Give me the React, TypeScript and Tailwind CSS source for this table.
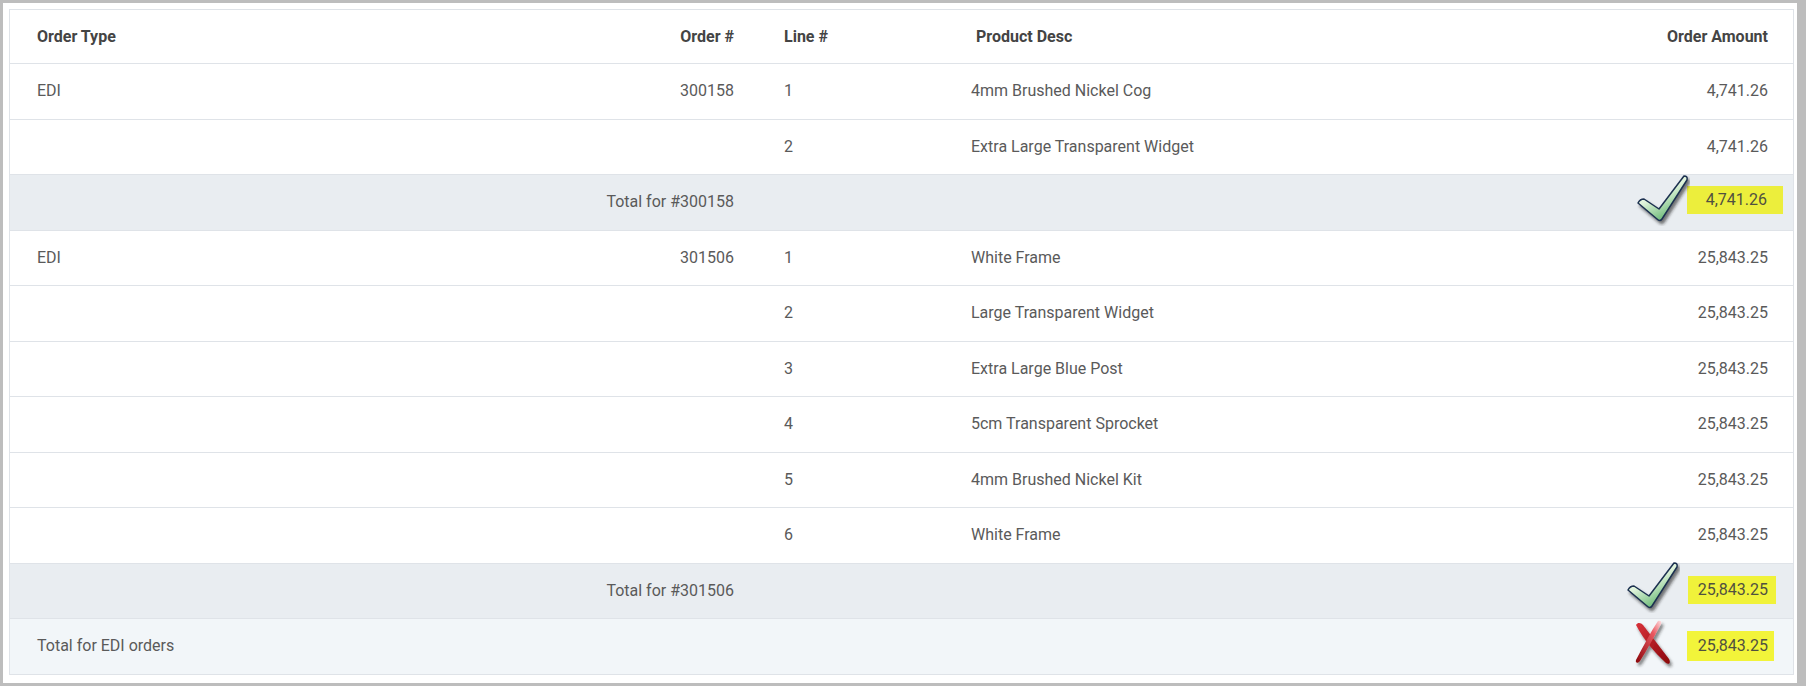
import React from "react";

type Row =
  | { kind: "line"; type?: string; order?: string; line: string; desc: string; amount: string }
  | { kind: "orderTotal"; label: string; amount: string }
  | { kind: "typeTotal"; label: string; amount: string };

const rows: Row[] = [
  { kind: "line", type: "EDI", order: "300158", line: "1", desc: "4mm Brushed Nickel Cog", amount: "4,741.26" },
  { kind: "line", line: "2", desc: "Extra Large Transparent Widget", amount: "4,741.26" },
  { kind: "orderTotal", label: "Total for #300158", amount: "4,741.26" },
  { kind: "line", type: "EDI", order: "301506", line: "1", desc: "White Frame", amount: "25,843.25" },
  { kind: "line", line: "2", desc: "Large Transparent Widget", amount: "25,843.25" },
  { kind: "line", line: "3", desc: "Extra Large Blue Post", amount: "25,843.25" },
  { kind: "line", line: "4", desc: "5cm Transparent Sprocket", amount: "25,843.25" },
  { kind: "line", line: "5", desc: "4mm Brushed Nickel Kit", amount: "25,843.25" },
  { kind: "line", line: "6", desc: "White Frame", amount: "25,843.25" },
  { kind: "orderTotal", label: "Total for #301506", amount: "25,843.25" },
  { kind: "typeTotal", label: "Total for EDI orders", amount: "25,843.25" },
];

const grid = "grid grid-cols-[390px_360px_187px_553px_293px]";

function CheckMark({ id }: { id: string }) {
  return (
    <svg width="54" height="52" viewBox="0 0 54 52">
      <defs>
        <linearGradient id={`g-${id}`} x1="0" y1="0" x2="0.6" y2="1">
          <stop offset="0" stopColor="#ffffff" />
          <stop offset="0.5" stopColor="#dff3da" />
          <stop offset="1" stopColor="#5fb46d" />
        </linearGradient>
        <filter id={`s-${id}`} x="-20%" y="-20%" width="150%" height="150%">
          <feDropShadow dx="2" dy="3" stdDeviation="1.8" floodColor="#222" floodOpacity="0.6" />
        </filter>
      </defs>
      <path
        d="M2 29 Q4 25 8 25 L23 35 L48 2 Q52 2 51 6 L26 45 Q24 48 21 45 Z"
        fill={`url(#g-${id})`}
        stroke="#1c3050"
        strokeWidth="1.5"
        strokeLinejoin="round"
        filter={`url(#s-${id})`}
      />
    </svg>
  );
}

function CrossMark() {
  return (
    <svg width="44" height="50" viewBox="0 0 44 50">
      <defs>
        <linearGradient id="xr1" x1="0" y1="0" x2="1" y2="1">
          <stop offset="0" stopColor="#d8323a" />
          <stop offset="1" stopColor="#8a050a" />
        </linearGradient>
        <linearGradient id="xr2" x1="1" y1="0" x2="0" y2="1">
          <stop offset="0" stopColor="#ffe0e3" />
          <stop offset="0.3" stopColor="#ea5a62" />
          <stop offset="1" stopColor="#8a050a" />
        </linearGradient>
        <filter id="xs" x="-30%" y="-30%" width="170%" height="170%">
          <feDropShadow dx="2" dy="3" stdDeviation="1.8" floodColor="#222" floodOpacity="0.55" />
        </filter>
      </defs>
      <g filter="url(#xs)">
        <path d="M3 5 C5 2 8 3 10 5 L36 39 C38 43 36 45 33 43 C21 32 11 20 3 5 Z" fill="url(#xr1)" />
        <path d="M25 1 C28 0 29 2 28 4 C21 17 14 30 7 41 C5 44 2 43 3 40 C10 27 17 13 25 1 Z" fill="url(#xr2)" />
      </g>
    </svg>
  );
}

export default function App() {
  return (
    <div className="w-[1806px] h-[686px] overflow-hidden bg-white border-[#bdbdbd] border-t-[3px] border-l-[3px] border-r-[9px] border-b-[3px] pt-[6px] pl-[6px] pr-[3px] font-['Roboto',sans-serif] text-[16px] text-[#5a5a5a]">
      <div className="border-l border-r border-t border-[#dfe3e8]">
        {/* header */}
        <div className={`${grid} h-[54px] items-center border-b border-[#dfe3e8] font-bold text-[#444]`}>
          <div className="pl-[27px]">Order Type</div>
          <div className="pr-[26px] text-right">Order #</div>
          <div className="pl-[24px]">Line #</div>
          <div className="pl-[29px]">Product Desc</div>
          <div className="pr-[25px] text-right">Order Amount</div>
        </div>

        {rows.map((r, i) => {
          if (r.kind === "line") {
            return (
              <div key={i} className={`${grid} h-[55.5px] items-center border-b border-[#dfe3e8]`}>
                <div className="pl-[27px]">{r.type}</div>
                <div className="pr-[26px] text-right">{r.order}</div>
                <div className="pl-[24px]">{r.line}</div>
                <div className="pl-[24px]">{r.desc}</div>
                <div className="pr-[25px] text-right">{r.amount}</div>
              </div>
            );
          }
          const isOrder = r.kind === "orderTotal";
          return (
            <div
              key={i}
              className={`${grid} h-[55.5px] items-center border-b border-[#dfe3e8] ${isOrder ? "bg-[#e9edf1]" : "bg-[#f2f6f9]"}`}
            >
              {isOrder ? (
                <>
                  <div />
                  <div className="pr-[26px] text-right">{r.label}</div>
                </>
              ) : (
                <>
                  <div className="pl-[27px]">{r.label}</div>
                  <div />
                </>
              )}
              <div />
              <div />
              <div className="relative flex justify-end pr-[25px]">
                {i === 2 ? (
                  <>
                    <div className="absolute left-[136px] top-[-16px]">
                      <CheckMark id="a" />
                    </div>
                    <span className="mr-[-15px] bg-[#ecee3c] pl-[19px] pr-[16px] py-[2px] mt-[-4px] text-[#505040]">{r.amount}</span>
                  </>
                ) : i === 9 ? (
                  <>
                    <div className="absolute left-[126px] top-[-17px]">
                      <CheckMark id="b" />
                    </div>
                    <span className="mr-[-8px] bg-[#f0f23a] pl-[10px] pr-[8px] py-[2px] mt-[-2px] text-[#505040]">{r.amount}</span>
                  </>
                ) : (
                  <>
                    <div className="absolute left-[133px] top-[-11px]">
                      <CrossMark />
                    </div>
                    <span className="mr-[-6px] bg-[#f2f43a] pl-[11px] pr-[6px] py-[3px] text-[#505040]">{r.amount}</span>
                  </>
                )}
              </div>
            </div>
          );
        })}
      </div>
    </div>
  );
}
